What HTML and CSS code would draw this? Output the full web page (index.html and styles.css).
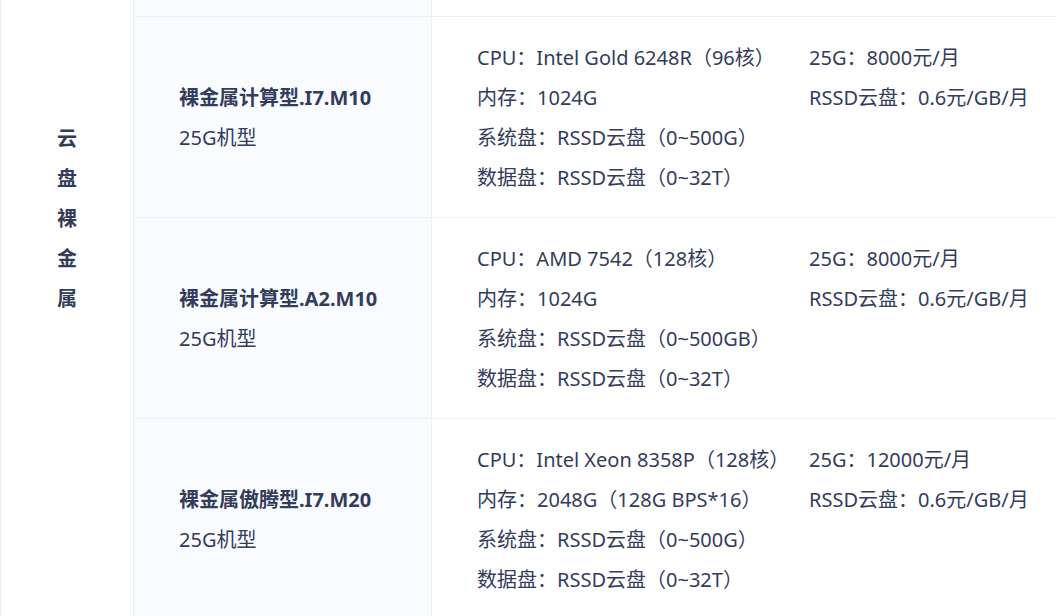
FILE: index.html
```html
<!DOCTYPE html>
<html lang="zh-CN">
<head>
<meta charset="utf-8">
<title>云盘裸金属</title>
<link rel="stylesheet" href="styles.css">
</head>
<body>
<div class="table">
  <div class="group">
    <div class="group-label">
      <span>云</span><span>盘</span><span>裸</span><span>金</span><span>属</span>
    </div>
  </div>
  <div class="rows">
    <div class="row row-prev">
      <div class="name"></div>
      <div class="spec"></div>
    </div>
    <div class="row">
      <div class="name">
        <div class="title">裸金属计算型.I7.M10</div>
        <div class="sub">25G机型</div>
      </div>
      <div class="spec">
        <div class="grid">
          <div>CPU：Intel Gold 6248R（96核）</div><div>25G：8000元/月</div>
          <div>内存：1024G</div><div>RSSD云盘：0.6元/GB/月</div>
          <div>系统盘：RSSD云盘（0~500G）</div><div></div>
          <div>数据盘：RSSD云盘（0~32T）</div><div></div>
        </div>
      </div>
    </div>
    <div class="row">
      <div class="name">
        <div class="title">裸金属计算型.A2.M10</div>
        <div class="sub">25G机型</div>
      </div>
      <div class="spec">
        <div class="grid">
          <div>CPU：AMD 7542（128核）</div><div>25G：8000元/月</div>
          <div>内存：1024G</div><div>RSSD云盘：0.6元/GB/月</div>
          <div>系统盘：RSSD云盘（0~500GB）</div><div></div>
          <div>数据盘：RSSD云盘（0~32T）</div><div></div>
        </div>
      </div>
    </div>
    <div class="row">
      <div class="name">
        <div class="title">裸金属傲腾型.I7.M20</div>
        <div class="sub">25G机型</div>
      </div>
      <div class="spec">
        <div class="grid">
          <div>CPU：Intel Xeon 8358P（128核）</div><div>25G：12000元/月</div>
          <div>内存：2048G（128G BPS*16）</div><div>RSSD云盘：0.6元/GB/月</div>
          <div>系统盘：RSSD云盘（0~500G）</div><div></div>
          <div>数据盘：RSSD云盘（0~32T）</div><div></div>
        </div>
      </div>
    </div>
  </div>
</div>
</body>
</html>
```

FILE: styles.css
```css
html, body {
  margin: 0;
  padding: 0;
  background: #ffffff;
  overflow: hidden;
}
body {
  font-family: "Noto Sans", "Noto Sans CJK SC", sans-serif;
  color: #333c5b;
  font-size: 20px;
}
.table {
  display: flex;
  margin-top: -184px;
  border-left: 1px solid #e6ebf7;
  width: 1055px;
}
.group {
  width: 132px;
  flex: none;
  border-right: 1px solid #e6ebf7;
  display: flex;
  align-items: center;
  justify-content: center;
  padding-top: 2px;
}
.group-label {
  display: flex;
  flex-direction: column;
  align-items: center;
  font-weight: 700;
  font-size: 20px;
  line-height: 40px;
}
.rows {
  flex: 1;
  display: flex;
  flex-direction: column;
}
.row {
  display: flex;
  height: 200px;
  border-bottom: 1px solid #edf0f8;
}
.row:last-child {
  border-bottom: none;
}
.name {
  width: 252px;
  flex: none;
  padding-left: 45px;
  padding-top: 2px;
  background: #f9fbff;
  border-right: 1px solid #edf0f8;
  display: flex;
  flex-direction: column;
  justify-content: center;
  line-height: 40px;
}
.title {
  font-weight: 700;
}
.spec {
  flex: 1;
  padding-left: 45px;
  padding-top: 2px;
  display: flex;
  align-items: center;
}
.grid {
  display: grid;
  grid-template-columns: 332px auto;
  line-height: 40px;
  white-space: nowrap;
}
```
